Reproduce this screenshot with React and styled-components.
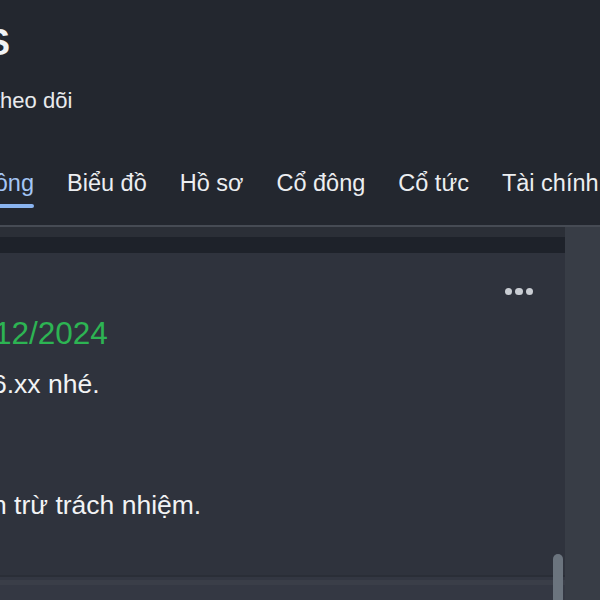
import React from 'react';
import styled, { createGlobalStyle, css } from 'styled-components';

const GlobalStyle = createGlobalStyle`
  html, body {
    margin: 0;
    padding: 0;
    background: #23272f;
    overflow: hidden;
  }
  body {
    font-family: 'Liberation Sans', Arial, sans-serif;
  }
`;

// the page is wider than the shot: $cut pulls a line left so its head is clipped
const clipped = css`
  white-space: nowrap;
  margin-left: ${(p) => -(p.$cut || 0)}px;
`;

const Page = styled.div`
  width: 600px;
  height: 600px;
  display: flex;
  flex-direction: column;
  overflow: hidden;
  background: #23272f;
`;

const Header = styled.header`
  flex-shrink: 0;
  padding: 25px 0 17px;
  color: #f1f3f5;
`;

const Title = styled.h1`
  ${clipped};
  margin-top: 0;
  margin-bottom: 0;
  font-size: 36px;
  line-height: 36px;
  font-weight: bold;
`;

const Followers = styled.div`
  ${clipped};
  margin-top: 29px;
  font-size: 22px;
  line-height: 22px;
  color: #e8eaed;
`;

const Tabs = styled.nav`
  ${clipped};
  display: flex;
  gap: 33px;
  margin-top: 60px;
`;

const Tab = styled.div`
  display: flex;
  flex-direction: column;
  gap: 8px;
  font-size: 23.5px;
  line-height: 23.5px;
  color: ${(p) => (p.$active ? '#a4c6f6' : '#eceef1')};

  &::after {
    content: '';
    height: 4px;
    border-radius: 2px;
    background: ${(p) => (p.$active ? '#8ab4f0' : 'transparent')};
  }
`;

const Body = styled.div`
  flex: 1;
  display: flex;
  border-top: 2px solid #464b54;
  min-height: 0;
`;

const Feed = styled.main`
  position: relative;
  flex: 1;
  display: flex;
  flex-direction: column;
  overflow: hidden;
`;

const Side = styled.aside`
  width: 35px;
  background: #383d46;
`;

const Band = styled.div`
  flex-shrink: 0;
  height: ${(p) => p.$h}px;
  background: ${(p) => p.$bg};
`;

const Post = styled.article`
  flex-shrink: 0;
  background: #2f333d;
  padding: 35px 32px 50px 0;
`;

const PostTools = styled.div`
  display: flex;
  justify-content: flex-end;
  gap: 3px;
`;

const Dot = styled.span`
  width: 7.5px;
  height: 7.5px;
  border-radius: 50%;
  background: #c9cdd3;
`;

const PostDate = styled.div`
  ${clipped};
  margin-top: 23px;
  font-size: 31.5px;
  line-height: 31.5px;
  color: #2db453;
`;

const Line = styled.p`
  ${clipped};
  margin-top: ${(p) => p.$gap || 0}px;
  margin-bottom: 0;
  font-size: 26.5px;
  line-height: 40px;
  color: #f2f3f5;
`;

const NextPost = styled.article`
  flex: 1;
  background: #343843;
  border-top: 2px solid #2a2e37;
  box-shadow: inset 0 3px 0 #333742, inset 0 8px 0 #3a3e48;
`;

const Thumb = styled.div`
  position: absolute;
  top: 327px;
  right: 2px;
  width: 10px;
  height: 90px;
  border-radius: 5px;
  background: #6b747e;
`;

const tabs = ['Cộng đồng', 'Biểu đồ', 'Hồ sơ', 'Cổ đông', 'Cổ tức', 'Tài chính'];

export default function App() {
  return (
    <Page>
      <GlobalStyle />
      <Header>
        <Title $cut={14}>S</Title>
        <Followers $cut={6}>theo dõi</Followers>
        <Tabs $cut={81}>
          {tabs.map((t, i) => (
            <Tab key={t} $active={i === 0}>{t}</Tab>
          ))}
        </Tabs>
      </Header>
      <Body>
        <Feed>
          <Band $h={10} $bg="#2b2f37" />
          <Band $h={16} $bg="#1e222a" />
          <Post>
            <PostTools>
              <Dot />
              <Dot />
              <Dot />
            </PostTools>
            <PostDate $cut={6}>12/2024</PostDate>
            <Line $cut={8} $gap={14}>6.xx nhé.</Line>
            <Line $cut={8} $gap={81}>n trừ trách nhiệm.</Line>
          </Post>
          <NextPost />
          <Thumb />
        </Feed>
        <Side />
      </Body>
    </Page>
  );
}
